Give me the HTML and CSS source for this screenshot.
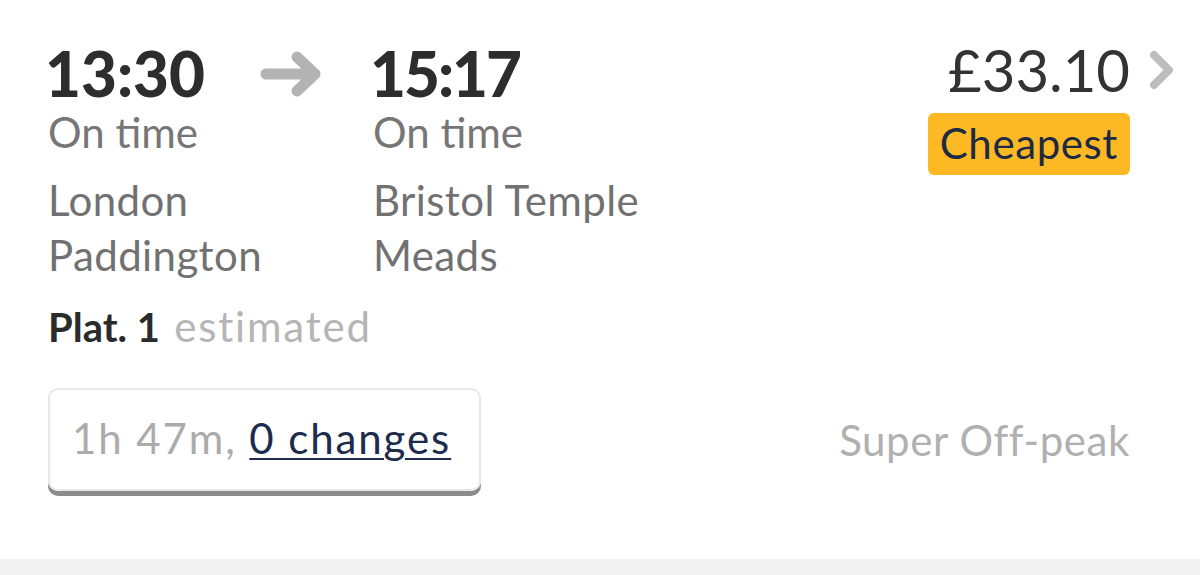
FILE: index.html
```html
<!DOCTYPE html>
<html lang="en">

<head>
    <meta charset="UTF-8">
    <meta name="viewport" content="width=device-width, initial-scale=1.0">
    <title>Journey</title>
    <link rel="stylesheet" href="styles.css">
</head>

<body>
    <div class="card">
        <div class="top">
            <div class="stops">
                <div class="stop dep">
                    <div class="time_row">
                        <div class="time">13:30</div>
                        <svg class="arrow" width="62" height="46" viewBox="0 0 62 46">
                            <path d="M6 23 H55 M37 6 L55 23 L37 40" fill="none" stroke="#b3b3b3" stroke-width="11" stroke-linecap="round" stroke-linejoin="round" />
                        </svg>
                    </div>
                    <div class="status">On time</div>
                    <div class="station">London Paddington</div>
                </div>
                <div class="stop arr">
                    <div class="time_row">
                        <div class="time">15:17</div>
                    </div>
                    <div class="status">On time</div>
                    <div class="station">Bristol Temple Meads</div>
                </div>
            </div>
            <div class="fare">
                <div class="price_row">
                    <div class="price">£33.10</div>
                    <svg class="chevron" width="25" height="40" viewBox="0 0 25 40">
                        <path d="M5 5 L20 20 L5 35" fill="none" stroke="#bdbdbd" stroke-width="8" stroke-linecap="round" stroke-linejoin="round" />
                    </svg>
                </div>
                <div class="badge">Cheapest</div>
            </div>
        </div>
        <div class="plat"><b>Plat. 1</b> <span>estimated</span></div>
        <div class="bottom">
            <div class="duration">1h 47m, <a href="#">0 changes</a></div>
            <div class="ticket">Super Off-peak</div>
        </div>
    </div>
</body>

</html>
```

FILE: styles.css
```css
html,
body {
    margin: 0;
    background-color: #f2f2f2;
}

.card {
    height: 559px;
    box-sizing: border-box;
    padding: 42px 70px 0 48px;
    background-color: #fff;
    font-family: Lato, "Liberation Sans", sans-serif;
    color: #2d2d2d;
}

.top {
    display: flex;
    justify-content: space-between;
}

.stops {
    display: flex;
}

.dep {
    width: 325px;
}

.arr {
    width: 300px;
}

.time_row {
    display: flex;
    justify-content: space-between;
    align-items: center;
}

.dep .time_row {
    padding-right: 51px;
}

.time {
    margin-left: -3px;
    font-size: 62px;
    line-height: 62px;
    font-weight: 900;
}

.arr .time {
    letter-spacing: -2px;
}

.arrow {
    margin-top: 2px;
}

.status {
    margin-top: 3px;
    font-size: 42px;
    line-height: 50px;
    color: #767676;
}

.station {
    margin-top: 16px;
    font-size: 42px;
    line-height: 55px;
    letter-spacing: 0.4px;
    color: #717171;
}

.fare {
    display: flex;
    flex-direction: column;
    align-items: flex-end;
}

.price_row {
    display: flex;
    align-items: center;
    margin-right: -44px;
}

.price {
    font-size: 58px;
    line-height: 56px;
    color: #333;
}

.chevron {
    margin-left: 19px;
}

.badge {
    margin-top: 15px;
    padding: 5px 12px 7px;
    border-radius: 6px;
    background-color: #fcb924;
    color: #1d2a44;
    font-size: 42px;
    line-height: 50px;
    letter-spacing: 0.6px;
}

.plat {
    margin-top: 18px;
    font-size: 40px;
    line-height: 50px;
}

.plat b {
    font-weight: 700;
    color: #2b2b2b;
}

.plat span {
    margin-left: 4px;
    font-size: 42px;
    letter-spacing: 1.8px;
    color: #b5b5b5;
}

.bottom {
    display: flex;
    justify-content: space-between;
    align-items: center;
    margin-top: 36px;
}

.duration {
    padding: 23px 28px 26px 22px;
    border: 2px solid #e8e8e8;
    border-radius: 10px;
    box-shadow: 0 5px 0 #8c8c8c;
    font-size: 42px;
    line-height: 50px;
    letter-spacing: 1.9px;
    color: #ababab;
}

.duration a {
    color: #1d2b4c;
    text-decoration: underline;
    text-decoration-thickness: 2px;
    text-underline-offset: 4px;
}

.ticket {
    font-size: 42px;
    line-height: 50px;
    letter-spacing: 0.6px;
    color: #b0b0b0;
}
```
